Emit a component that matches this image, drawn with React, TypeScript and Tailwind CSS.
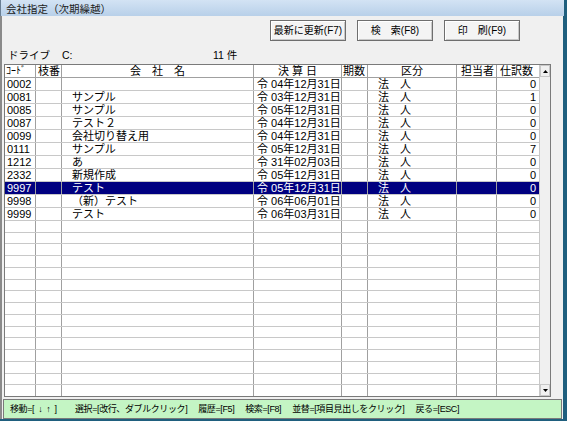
import React from "react";

// 会社指定（次期繰越） — company picker window, classic Win32 grid look.

type Row = {
  code: string;
  name: string;
  date: string;
  kubun: string;
  count: string;
};

const ROWS: Row[] = [
  { code: "0002", name: "", date: "令 04年12月31日", kubun: "法　人", count: "0" },
  { code: "0081", name: "サンプル", date: "令 03年12月31日", kubun: "法　人", count: "1" },
  { code: "0085", name: "サンプル", date: "令 05年12月31日", kubun: "法　人", count: "0" },
  { code: "0087", name: "テスト２", date: "令 04年12月31日", kubun: "法　人", count: "0" },
  { code: "0099", name: "会社切り替え用", date: "令 04年12月31日", kubun: "法　人", count: "0" },
  { code: "0111", name: "サンプル", date: "令 05年12月31日", kubun: "法　人", count: "7" },
  { code: "1212", name: "あ", date: "令 31年02月03日", kubun: "法　人", count: "0" },
  { code: "2332", name: "新規作成", date: "令 05年12月31日", kubun: "法　人", count: "0" },
  { code: "9997", name: "テスト", date: "令 05年12月31日", kubun: "法　人", count: "0" },
  { code: "9998", name: "（新）テスト", date: "令 06年06月01日", kubun: "法　人", count: "0" },
  { code: "9999", name: "テスト", date: "令 06年03月31日", kubun: "法　人", count: "0" },
];

const TOTAL_ROWS = 26;
const SELECTED = "9997";

const cell = "h-full border-r border-[#a0a0a0] overflow-hidden whitespace-nowrap";

function Button({ label }: { label: string }) {
  return (
    <button
      type="button"
      className="flex h-[21px] w-[76px] items-center justify-center border border-[#6e6e6e] bg-[#f4f4f4] text-[10px] leading-none text-black shadow-[inset_1px_1px_0_#ffffff,inset_-1px_-1px_0_#c8c8c8]"
    >
      {label}
    </button>
  );
}

function Arrow({ up }: { up?: boolean }) {
  return (
    <div className="flex h-[12px] w-full items-center justify-center border border-[#c8c8c8] bg-[#f0f0f0]">
      <svg width="5" height="3" viewBox="0 0 5 3">
        <path d={up ? "M0 3 L2.5 0 L5 3 Z" : "M0 0 L2.5 3 L5 0 Z"} fill="#000" />
      </svg>
    </div>
  );
}

export default function App() {
  const blanks = TOTAL_ROWS - ROWS.length;

  return (
    <div className="flex h-[421px] w-[567px] flex-col overflow-hidden bg-[#1f5f7e] font-['Liberation_Sans','Noto_Sans_CJK_JP',sans-serif] text-black">
      {/* title bar */}
      <div className="mr-[3px] flex h-[18px] items-end border-l border-[#6a7f94] bg-gradient-to-b from-[#d3e3f4] to-[#b8d0e9] pb-[2px] pl-[5px] text-[10.5px] leading-none text-[#1b1b1b]">
        会社指定（次期繰越）
      </div>

      <div className="mb-[2px] mr-[4px] flex flex-1 flex-col border-l-2 border-[#8a8a8a] bg-[#f0f0f0]">
        {/* buttons */}
        <div className="flex justify-end gap-[11px] pr-[43px] pt-[4px]">
          <Button label="最新に更新(F7)" />
          <Button label="検　索(F8)" />
          <Button label="印　刷(F9)" />
        </div>

        {/* drive / count */}
        <div className="mt-[8px] flex h-[12px] items-center text-[10.5px] leading-none">
          <span className="ml-[6px] w-[54px]">ドライブ</span>
          <span className="w-[151px]">C:</span>
          <span>11 件</span>
        </div>

        {/* grid */}
        <div className="ml-[2px] mt-[3px] flex h-[333px] w-[547px] border border-[#7a7a7a] bg-white">
          <div className="flex flex-1 flex-col">
            {/* header */}
            <div className="flex h-[13px] border-b border-[#a0a0a0] text-[11px] leading-[12px]">
              <div className={`${cell} w-[31px] pl-[1px] text-[10px]`}>ｺｰﾄﾞ</div>
              <div className={`${cell} w-[26px] pl-[2px]`}>枝番</div>
              <div className={`${cell} w-[192px] text-center`}>会　社　名</div>
              <div className={`${cell} w-[88px] text-center`}>決 算 日</div>
              <div className={`${cell} w-[26px] pl-[1px]`}>期数</div>
              <div className={`${cell} w-[89px] text-center`}>区分</div>
              <div className={`${cell} w-[40px] pr-[2px] text-right`}>担当者</div>
              <div className="h-full w-[41px] pl-[3px]">仕訳数</div>
            </div>

            {/* body */}
            <div className="flex flex-1 flex-col">
              {ROWS.map((r) => {
                const sel = r.code === SELECTED;
                return (
                  <div
                    key={r.code}
                    className={`flex flex-1 border-b border-[#c8c8c8] text-[11px] leading-[11px] ${
                      sel ? "bg-[#000080] text-white" : ""
                    }`}
                  >
                    <div className={`${cell} w-[31px] pl-[2px] pt-[1px]`}>{r.code}</div>
                    <div className={`${cell} w-[26px]`} />
                    <div className={`${cell} w-[192px] pl-[10px] pt-[1px]`}>{r.name}</div>
                    <div className={`${cell} w-[88px] pl-[3px] pt-[1px]`}>{r.date}</div>
                    <div className={`${cell} w-[26px]`} />
                    <div className={`${cell} w-[89px] pl-[10px] pt-[1px]`}>{r.kubun}</div>
                    <div className={`${cell} w-[40px]`} />
                    <div className="h-full w-[41px] pr-[2px] pt-[1px] text-right">{r.count}</div>
                  </div>
                );
              })}
              {Array.from({ length: blanks }).map((_, i) => (
                <div key={i} className="flex flex-1 border-b border-[#c8c8c8] last:border-b-0">
                  <div className={`${cell} w-[31px]`} />
                  <div className={`${cell} w-[26px]`} />
                  <div className={`${cell} w-[192px]`} />
                  <div className={`${cell} w-[88px]`} />
                  <div className={`${cell} w-[26px]`} />
                  <div className={`${cell} w-[89px]`} />
                  <div className={`${cell} w-[40px]`} />
                  <div className="h-full w-[41px]" />
                </div>
              ))}
            </div>
          </div>

          {/* scrollbar */}
          <div className="flex w-[11px] flex-col border-l border-[#c8c8c8] bg-[#f0f0f0]">
            <Arrow up />
            <div className="flex-1" />
            <Arrow />
          </div>
        </div>

        {/* status bar */}
        <div className="mx-[1px] mt-[2px] flex h-[20px] items-center gap-[11px] whitespace-nowrap border border-[#7a7a7a] bg-[#c4f5c4] pl-[6px] text-[9px] leading-none tracking-[-0.4px]">
          <span className="flex w-[54px] shrink-0 gap-[4px]">
            <span>移動=[</span>
            <span>↓</span>
            <span>↑</span>
            <span>]</span>
          </span>
          <span>選択=[改行、ダブルクリック]</span>
          <span>履歴=[F5]</span>
          <span>検索=[F8]</span>
          <span>並替=[項目見出しをクリック]</span>
          <span>戻る=[ESC]</span>
        </div>
      </div>
    </div>
  );
}
